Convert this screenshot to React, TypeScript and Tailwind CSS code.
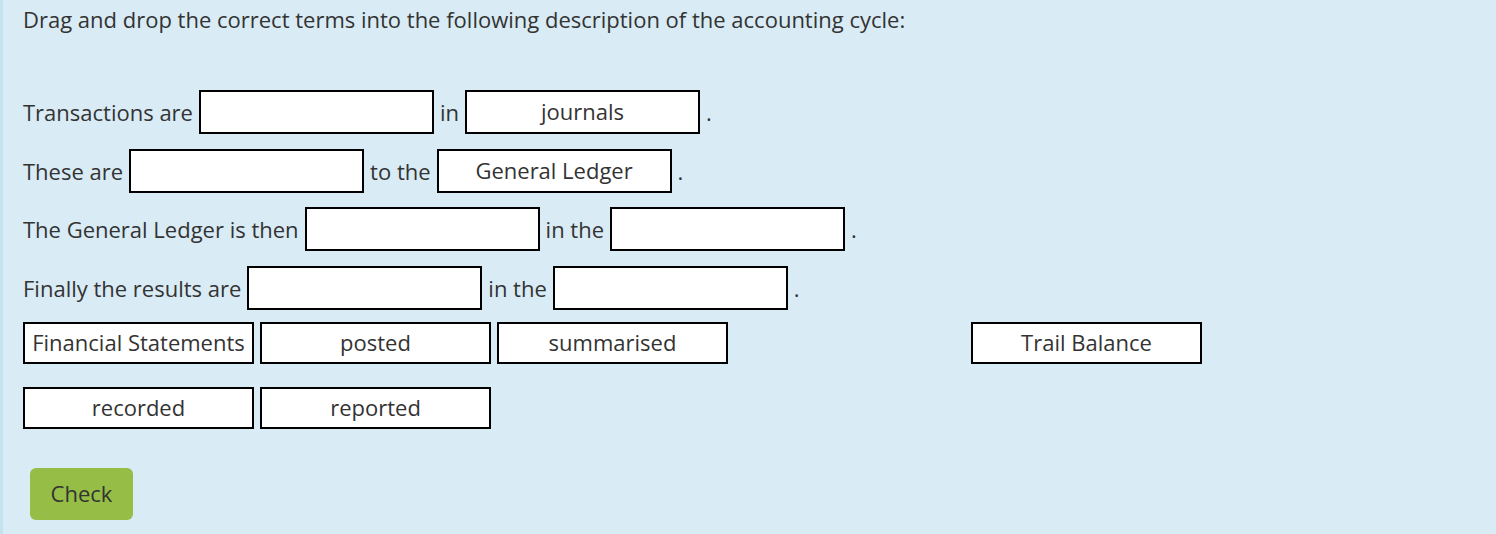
import * as React from "react";

const SENTENCES: (string | { fill?: string })[][] = [
  ["Transactions are", {}, "in", { fill: "journals" }, "."],
  ["These are", {}, "to the", { fill: "General Ledger" }, "."],
  ["The General Ledger is then", {}, "in the", {}, "."],
  ["Finally the results are", {}, "in the", {}, "."],
];

// null marks an empty slot left by a term already dropped
const TERMS: (string | null)[] = [
  "Financial Statements",
  "posted",
  "summarised",
  null,
  "Trail Balance",
  null,
  "recorded",
  "reported",
];

function DropBox({ fill }: { fill?: string }) {
  return (
    <span className="flex h-[44px] w-[235px] items-center justify-center border-2 border-black bg-white pb-[2px]">
      {fill}
    </span>
  );
}

export default function App() {
  return (
    <div
      className="min-h-screen border-l-[3px] border-[#c3e3ee] bg-[#d9ebf5] pl-[20px] pt-[4px] text-[22px] leading-[30px] text-[#333]"
      style={{ fontFamily: '"Open Sans", "Liberation Sans", sans-serif' }}
    >
      <p>Drag and drop the correct terms into the following description of the accounting cycle:</p>

      <div className="mt-[56px] flex flex-col gap-[14.67px]">
        {SENTENCES.map((parts, i) => (
          <div key={i} className="flex items-center gap-[6px]">
            {parts.map((p, j) =>
              typeof p === "string" ? <span key={j}>{p}</span> : <DropBox key={j} fill={p.fill} />
            )}
          </div>
        ))}
      </div>

      <div className="mt-[12px] grid grid-cols-[repeat(6,231px)] gap-x-[6px] gap-y-[23px]">
        {TERMS.map((t, i) =>
          t ? (
            <div
              key={i}
              className="flex h-[42px] items-center justify-center border-2 border-black bg-white pb-[2px]"
            >
              {t}
            </div>
          ) : (
            <div key={i} className="h-[42px]" />
          )
        )}
      </div>

      <button className="ml-[7px] mt-[39px] h-[52px] w-[103px] rounded-[6px] bg-[#96bd45] pb-[2px] text-[#333]">
        Check
      </button>
    </div>
  );
}
